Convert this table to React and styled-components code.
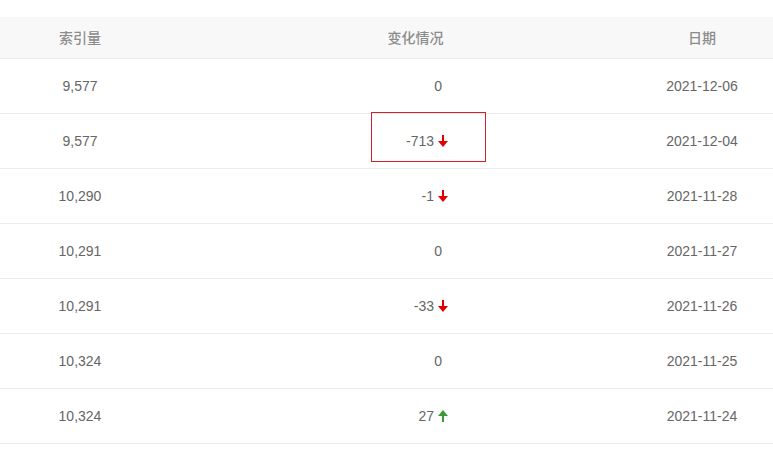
import React from "react";
import styled, { createGlobalStyle } from "styled-components";

const Global = createGlobalStyle`
  html, body { margin: 0; padding: 0; background: #fff; }
  body { font-family: "Liberation Sans", "Noto Sans CJK SC", sans-serif; }
`;

const Page = styled.div`
  position: relative;
  width: 773px;
  padding-top: 17px;
`;

const Grid = styled.div`
  display: grid;
  grid-template-columns: 160px 1fr 142px;
`;

const HeaderRow = styled(Grid)`
  height: 41px;
  background: #f8f8f8;
  border-bottom: 1px solid #ececec;
`;

const HeadCell = styled.div`
  display: flex;
  align-items: center;
  justify-content: center;
  padding-left: ${(p) => p.$shift || 0}px;
  padding-bottom: 2px;
  font-family: "Noto Sans CJK SC", sans-serif;
  font-size: 14px;
  font-weight: 500;
  color: #8c8c8c;
`;

const Row = styled(Grid)`
  height: 54px;
  border-bottom: 1px solid #ececec;
`;

const Cell = styled.div`
  display: flex;
  align-items: center;
  justify-content: center;
  font-size: 14px;
  color: #666;
`;

const ChangeCell = styled(Cell)`
  justify-content: flex-end;
  padding-right: ${(p) => (p.$arrow ? 183 : 189)}px;
`;

const Arrow = styled.svg`
  margin-left: 4px;
  display: block;
`;

const Highlight = styled.div`
  position: absolute;
  left: 371px;
  top: 112px;
  width: 113px;
  height: 48px;
  border: 1px solid #d0202a;
  pointer-events: none;
`;

const ArrowIcon = ({ dir }) => {
  const color = dir === "down" ? "#e00000" : "#3a9a3a";
  return (
    <Arrow width="10" height="12" viewBox="0 0 10 12">
      {dir === "down" ? (
        <>
          <rect x="4" y="0" width="2" height="7" fill={color} />
          <polygon points="0,6 10,6 5,12" fill={color} />
        </>
      ) : (
        <>
          <rect x="4" y="5" width="2" height="7" fill={color} />
          <polygon points="0,6 10,6 5,0" fill={color} />
        </>
      )}
    </Arrow>
  );
};

const data = [
  ["9,577", "0", null, "2021-12-06"],
  ["9,577", "-713", "down", "2021-12-04"],
  ["10,290", "-1", "down", "2021-11-28"],
  ["10,291", "0", null, "2021-11-27"],
  ["10,291", "-33", "down", "2021-11-26"],
  ["10,324", "0", null, "2021-11-25"],
  ["10,324", "27", "up", "2021-11-24"],
];

export default function App() {
  return (
    <Page>
      <Global />
      <HeaderRow>
        <HeadCell>索引量</HeadCell>
        <HeadCell $shift={40}>变化情况</HeadCell>
        <HeadCell>日期</HeadCell>
      </HeaderRow>
      {data.map(([idx, change, dir, date], i) => (
        <Row key={i}>
          <Cell>{idx}</Cell>
          <ChangeCell $arrow={!!dir}>
            {change}
            {dir && <ArrowIcon dir={dir} />}
          </ChangeCell>
          <Cell>{date}</Cell>
        </Row>
      ))}
      <Highlight />
    </Page>
  );
}
